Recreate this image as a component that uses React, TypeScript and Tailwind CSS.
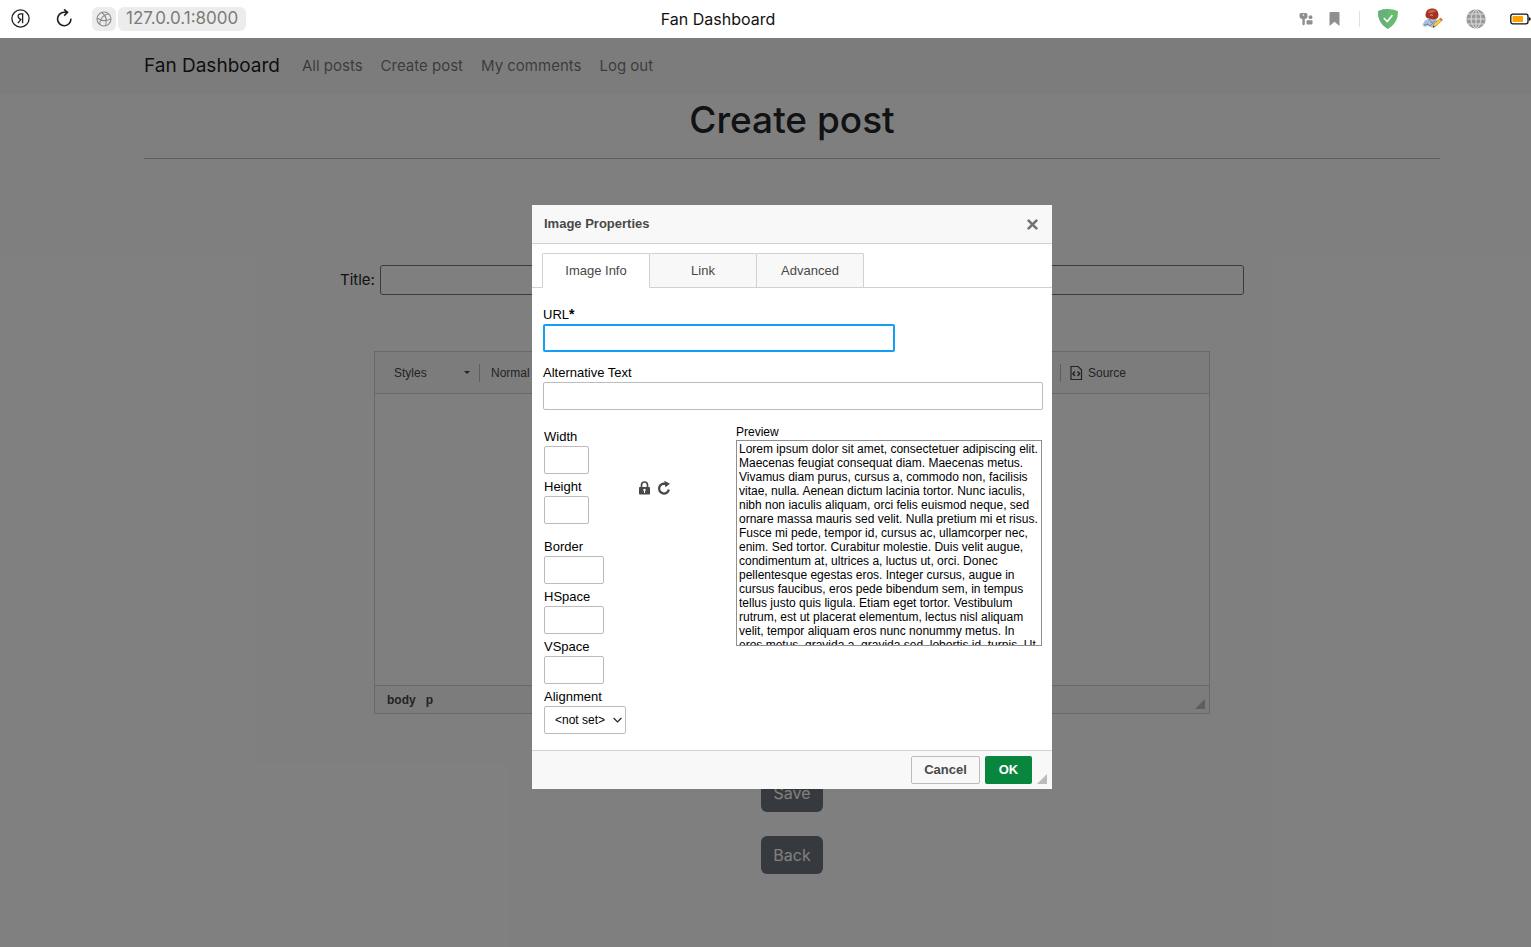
import type { ReactNode } from "react";

const LOREM =
  "Lorem ipsum dolor sit amet, consectetuer adipiscing elit. Maecenas feugiat consequat diam. Maecenas metus. Vivamus diam purus, cursus a, commodo non, facilisis vitae, nulla. Aenean dictum lacinia tortor. Nunc iaculis, nibh non iaculis aliquam, orci felis euismod neque, sed ornare massa mauris sed velit. Nulla pretium mi et risus. Fusce mi pede, tempor id, cursus ac, ullamcorper nec, enim. Sed tortor. Curabitur molestie. Duis velit augue, condimentum at, ultrices a, luctus ut, orci. Donec pellentesque egestas eros. Integer cursus, augue in cursus faucibus, eros pede bibendum sem, in tempus tellus justo quis ligula. Etiam eget tortor. Vestibulum rutrum, est ut placerat elementum, lectus nisl aliquam velit, tempor aliquam eros nunc nonummy metus. In eros metus, gravida a, gravida sed, lobortis id, turpis. Ut ultrices, ipsum at venenatis fringilla, sem nulla lacinia tellus, eget aliquet turpis mauris non enim.";

function BrowserBar() {
  return (
    <header className="flex h-[38px] shrink-0 items-center bg-white pl-[11px] pb-px">
      <div className="flex flex-1 items-center">
        <button aria-label="Yandex" className="mr-[26px]">
          <svg width="19" height="19" viewBox="0 0 19 19" fill="none" stroke="#1f1f1f" strokeWidth="1.3">
            <circle cx="9.5" cy="9.5" r="8.6" />
            <path d="M11.6 14.2V4.8H9.9C8.1 4.8 7.1 5.8 7.1 7.2c0 1.3.6 1.9 1.7 2.7l1 .7-2.9 3.6M11.6 4.8h.8" />
          </svg>
        </button>
        <button aria-label="Reload" className="mr-[19px]">
          <svg width="17" height="19" viewBox="0 0 17 19" fill="none" stroke="#1f1f1f" strokeWidth="1.6">
            <path d="M14.9 9.6a6.7 6.7 0 1 1-6.7-6.3h3.2M8.1.4l3.4 3-3.3 3.2" />
          </svg>
        </button>
        <button aria-label="Site information" className="mr-[2px] flex size-6 items-center justify-center rounded-md bg-[#ececec]">
          <svg width="16" height="16" viewBox="0 0 16 16" fill="none" stroke="#8a8a8a" strokeWidth="1.1">
            <circle cx="8" cy="8" r="7" />
            <path d="M5.6 1.500C9.500 4 11.400 8.500 9.600 14.700M12.300 2.700C7 4 4 8.200 3.600 13.400M1 7c4.500 3.200 9.600 3.400 13.900.6" />
          </svg>
        </button>
        <span className="flex h-6 items-center rounded-md bg-[#ececec] px-2 text-[17px] text-[#7b7b7b]">127.0.0.1:8000</span>
      </div>
      <h1 className="pr-[106px] text-base text-[#111]">Fan Dashboard</h1>
      <div className="flex flex-1 items-center justify-end">
        <svg className="mr-[15px]" width="15" height="14" viewBox="0 0 15 14" fill="#8f8f8f">
          <path d="M1.500 1h6l1 1.200v3L7 6.700 5.800 7v5.500L4.600 13.500 3.400 12.500V7L1.500 6.500.5 5V2.200z" />
          <circle cx="11.500" cy="5.200" r="1.900" />
          <rect x="7.500" y="8.300" width="6" height="4.200" rx="1" />
          <circle cx="4.500" cy="3" r=".8" fill="#fff" />
        </svg>
        <svg className="mr-[19px]" width="11" height="14" viewBox="0 0 11 14" fill="#8f8f8f">
          <path d="M1.500 0h8q1 0 1 1v13L5.500 9.800.5 14V1q0-1 1-1z" />
        </svg>
        <span className="mr-[18px] h-4 w-px bg-[#e0e0e0]" />
        <svg className="mr-[24px]" width="20" height="20" viewBox="0 0 20 20">
          <path d="M10 0c3.200 0 7 .7 9.900 2.200 0 3.300.4 11.500-9.900 17.800C-.3 13.700.1 5.500.1 2.200 3 .7 6.800 0 10 0z" fill="#68bc71" />
          <path d="M10 0C6.800 0 3 .7.1 2.200c0 3.300-.4 11.500 9.900 17.800z" fill="#67b279" />
          <path d="m5.800 9 3.400 3.500 5.200-6.300" fill="none" stroke="#fff" strokeWidth="1.600" />
        </svg>
        <svg className="mr-[23px]" width="21" height="21" viewBox="0 0 21 21">
          <path d="M3 12.500 8 10l6 1 3 3-3 4.500-5 1-2-1.500-5 .8-1.500-2.300z" fill="#a9bfdb" />
          <path d="m2 17 4-1 2 2 3-3M7 11l3 4 3-2" fill="none" stroke="#6e88aa" />
          <path d="M3.500 6.500C4 2 7 .5 10.500.5S16.500 3 16.500 7c0 3-2 4.500-5 4.500-2 0-3-.8-5-1-2-.3-3.200-1.700-3-4z" fill="#a43422" />
          <path d="M5.500 5C7 1.500 12 .8 14 3.500 12 5 8 4.500 5.500 5z" fill="#c8604c" />
          <path d="M8 7.500c1-.8 2-.8 3 0" stroke="#e8b4a5" fill="none" />
          <path d="m11 19 1-3 6.500-6 2 2-6.500 6z" fill="#f5cf38" stroke="#a27b14" strokeWidth=".6" />
          <path d="m17.500 11 1-1 2 2-1 1z" fill="#e35748" />
          <path d="m10.600 20 1-2.200 1.200 1.200z" fill="#333" />
        </svg>
        <svg className="mr-[24px]" width="20" height="20" viewBox="0 0 20 20">
          <circle cx="10" cy="10" r="9.700" fill="#9a9a9a" />
          <path d="M10 0v20M0 10h20M2 5h16M2 15h16M10 0C3.500 5 3.500 15 10 20M10 0c6.500 5 6.500 15 0 20" fill="none" stroke="#e3e3e3" strokeWidth=".9" />
        </svg>
        <svg width="21" height="12" viewBox="0 0 21 12">
          <rect x=".8" y="1.200" width="17.200" height="9.600" rx="2" fill="#fff" stroke="#111" strokeWidth="1.300" />
          <rect x="2.500" y="3" width="10.500" height="6" rx=".5" fill="#ffa200" />
          <path d="M18.800 4q2 .4 2 2t-2 2z" fill="#111" />
        </svg>
      </div>
    </header>
  );
}

const grip = "block size-0 border-b-[10px] border-l-[10px] border-l-transparent";

function PostPage() {
  return (
    <div className="pl-[53px]">
      <nav className="-ml-[53px] flex h-14 items-center bg-[#f8f9fa] pl-[144px] pt-px">
        <a href="#home" className="mr-[22px] text-[19px] text-black/90">Fan Dashboard</a>
        <div className="flex gap-[18px] text-[15px] text-black/55">
          <a href="#posts">All posts</a>
          <a href="#create">Create post</a>
          <a href="#comments">My comments</a>
          <a href="#logout">Log out</a>
        </div>
      </nav>
      <main className="flex flex-col items-center">
        <div className="w-full px-[91px]">
          <h2 className="border-b border-[#bcbdbf] pb-[14px] pt-[2px] text-center text-[37px] font-medium leading-[48px] text-[#212529]">Create post</h2>
        </div>
        <div className="mt-[106px] flex w-[904px] items-center gap-1">
          <label htmlFor="title" className="w-9 whitespace-nowrap text-[15px] text-[#212529]">Title:</label>
          <input id="title" className="h-[30px] flex-1 rounded-[3px] border border-[#767676] bg-white px-2" />
        </div>
        <section className="mt-14 w-[836px] border border-[#d1d1d1] font-['Liberation_Sans',Arial,sans-serif] text-xs text-[#484848]">
          <div className="flex h-[42px] items-center border-b border-[#d1d1d1] bg-[#f8f8f8] pl-[19px]">
            <button className="flex w-[76px] items-center justify-between">
              Styles
              <span className="size-0 border-x-3 border-t-3 border-x-transparent border-t-[#484848]" />
            </button>
            <span className="mx-[9px] h-[18px] w-px bg-[#bcbcbc]" />
            <button className="ml-[2px]">Normal</button>
            <div className="flex-1" />
            <span className="h-[18px] w-px bg-[#bcbcbc]" />
            <button className="ml-[9px] mr-[83px] flex items-center gap-[5px]">
              <svg width="13" height="16" viewBox="0 0 13 16" fill="none" stroke="#484848" strokeWidth="1.200">
                <path d="M1 1.500h7l3.500 3.200v9.800H1z" />
                <path d="M4.900 6.500 2.900 8.800l2 2.200M7.600 6.500l2 2.300-2 2.200" strokeWidth="1.500" />
              </svg>
              Source
            </button>
          </div>
          <div className="h-[291px] bg-white" />
          <div className="flex h-7 items-center justify-between border-t border-[#d1d1d1] bg-[#f8f8f8] pl-3 pr-1 font-bold">
            <div className="flex gap-[10px]"><span>body</span><span>p</span></div>
            <span className={`${grip} mt-2 border-b-[#bcbcbc]`} />
          </div>
        </section>
        <button className="mt-[60px] h-[38px] rounded-md bg-[#6c757d] px-3 text-base text-white">Save</button>
        <button className="mt-6 h-[38px] rounded-md bg-[#6c757d] px-3 text-base text-white">Back</button>
      </main>
    </div>
  );
}

const box = "block h-7 rounded-[2px] border border-[#bcbcbc] bg-white px-[6px] text-xs outline-none";

function Field({ id, label, children }: { id: string; label: string; children: ReactNode }) {
  return (
    <div>
      <label htmlFor={id} className="block h-[18px] text-[13px] leading-[18px]">{label}</label>
      {children}
    </div>
  );
}

function ImageDialog() {
  const idle = "-ml-px bg-[#f8f8f8] border-[#d1d1d1]";
  return (
    <div role="dialog" aria-label="Image Properties" className="w-[520px] bg-white text-xs text-black">
      <div className="flex h-[39px] items-center justify-between border-b border-[#d1d1d1] bg-[#f8f8f8] pl-3 pr-[11px]">
        <h3 className="text-[13px] font-bold text-[#484848]">Image Properties</h3>
        <button aria-label="Close" className="p-[3px]">
          <svg width="11" height="11" viewBox="0 0 11 11" stroke="#727272" strokeWidth="2.600" strokeLinecap="round">
            <path d="m1.600 1.600 7.800 7.800M9.400 1.600 1.600 9.400" />
          </svg>
        </button>
      </div>
      <div role="tablist" className="flex border-b border-[#d1d1d1] pl-[10px] pt-[9px] text-[13px] text-[#484848]">
        <button role="tab" aria-selected="true" className="-mb-px h-[35px] w-[108px] rounded-t-[2px] border border-[#d1d1d1] border-b-white bg-white">Image Info</button>
        <button role="tab" className={`${idle} h-[34px] w-[108px] rounded-t-[2px] border border-b-0`}>Link</button>
        <button role="tab" className={`${idle} h-[34px] w-[108px] rounded-t-[2px] border border-b-0`}>Advanced</button>
      </div>
      <div className="px-[11px] pb-4 pt-[18px]">
        <div>
          <label htmlFor="url" className="flex h-[18px] text-[13px] leading-[18px]">URL<b className="-mt-px text-sm leading-[18px]">*</b></label>
          <input id="url" className="block h-7 w-[352px] rounded-[2px] border-2 border-[#139ff7] bg-white px-[5px] outline-none" />
        </div>
        <div className="mt-3 -mr-[2px]">
          <Field id="alt" label="Alternative Text"><input id="alt" className={`${box} w-full`} /></Field>
        </div>
        <div className="mt-[15px] flex justify-between pl-px">
          <div className="flex pt-[3px]">
            <div className="flex w-[94px] flex-col gap-1">
              <Field id="width" label="Width"><input id="width" className={`${box} w-[45px]`} /></Field>
              <Field id="height" label="Height"><input id="height" className={`${box} w-[45px]`} /></Field>
              <div className="mt-[10px] flex flex-col gap-1">
                <Field id="border" label="Border"><input id="border" className={`${box} w-[60px]`} /></Field>
                <Field id="hspace" label="HSpace"><input id="hspace" className={`${box} w-[60px]`} /></Field>
                <Field id="vspace" label="VSpace"><input id="vspace" className={`${box} w-[60px]`} /></Field>
                <Field id="align" label="Alignment">
                  <div className="relative w-[82px]">
                    <select id="align" className="block h-7 w-full appearance-none rounded-[2px] border border-[#bcbcbc] bg-white pl-[10px] outline-none">
                      <option>&lt;not set&gt;</option>
                    </select>
                    <svg className="pointer-events-none absolute right-1 top-[11px]" width="9" height="7" viewBox="0 0 9 7" fill="none" stroke="#222" strokeWidth="1.200">
                      <path d="m.6 1 3.900 4 3.900-4" />
                    </svg>
                  </div>
                </Field>
              </div>
            </div>
            <div className="flex items-start gap-[6px] pt-[52px]">
              <button aria-label="Lock ratio">
                <svg width="13" height="16" viewBox="0 0 13 16">
                  <path d="M3.500 8V5a3 3 0 0 1 6 0v3" fill="none" stroke="#484848" strokeWidth="1.700" />
                  <rect x="1" y="7" width="11" height="7.500" rx=".8" fill="#484848" />
                  <circle cx="6.500" cy="10" r="1.200" fill="#fff" />
                  <path d="M6 10h1v3H6z" fill="#fff" />
                </svg>
              </button>
              <button aria-label="Reset size">
                <svg width="14" height="16" viewBox="0 0 14 16">
                  <path d="M11.800 9.500A4.900 4.900 0 1 1 8.500 4" fill="none" stroke="#484848" strokeWidth="2.300" />
                  <path d="M7.300.8 13 3.700 8.300 7.200z" fill="#484848" />
                </svg>
              </button>
            </div>
          </div>
          <div className="-mr-px w-[306px]">
            <div className="h-[15px] leading-[15px]">Preview</div>
            <div className="h-[206px] overflow-hidden border border-[#8f8f8f] px-[2px] pt-px leading-[14px]">{LOREM}</div>
          </div>
        </div>
      </div>
      <div className="flex h-[39px] items-center justify-end gap-[5px] border-t border-[#d1d1d1] bg-[#f8f8f8] pr-[5px] font-bold">
        <button className="h-7 w-[69px] rounded-[2px] border border-[#bcbcbc] text-[13px] text-[#484848]">Cancel</button>
        <button className="h-7 w-[47px] rounded-[2px] bg-[#09863e] text-[13px] text-white">OK</button>
        <span className={`${grip} mt-[17px] border-b-[#bcbcbc]`} />
      </div>
    </div>
  );
}

export default function App() {
  return (
    <div className="flex min-h-screen flex-col font-['Inter',sans-serif]">
      <BrowserBar />
      <div className="relative flex-1 overflow-hidden bg-white pb-10">
        <PostPage />
        <div className="absolute inset-0 flex items-start justify-center bg-black/50 pl-[53px] pt-[167px] font-['Liberation_Sans',Arial,sans-serif]">
          <ImageDialog />
        </div>
      </div>
    </div>
  );
}
